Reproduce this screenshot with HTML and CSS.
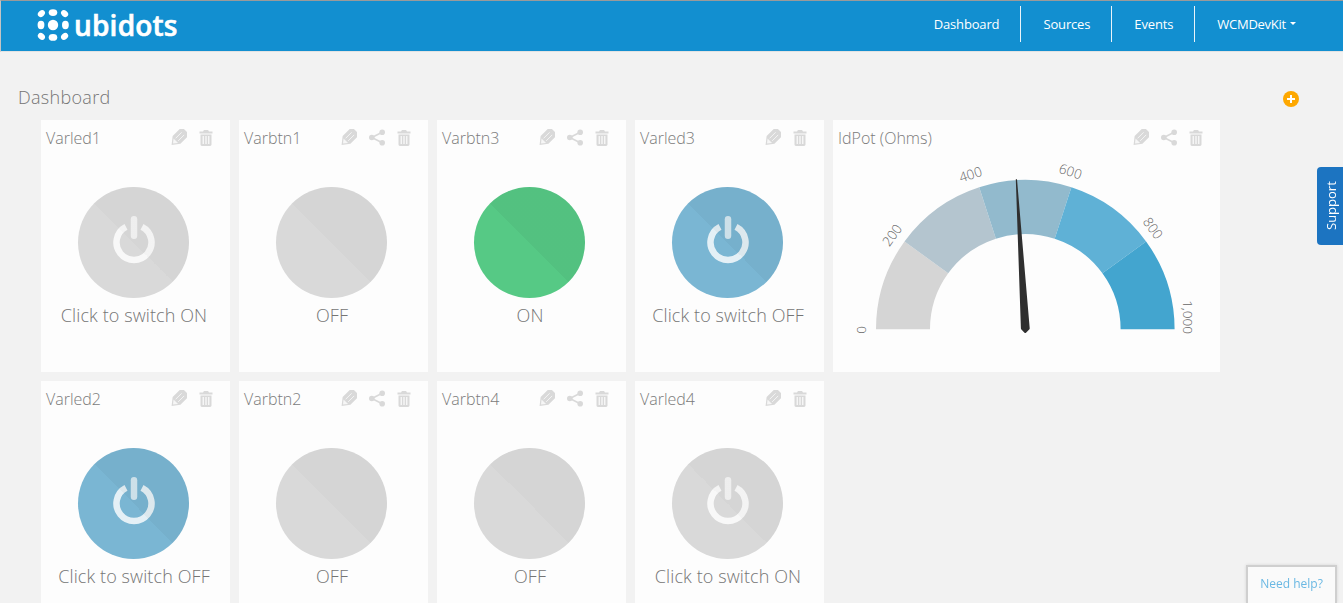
FILE: index.html
```html
<!DOCTYPE html>
<html lang="en">
<head>
<meta charset="utf-8">
<title>Ubidots Dashboard</title>
<link rel="stylesheet" href="styles.css">
</head>
<body>
<svg class="defs" width="0" height="0" aria-hidden="true">
  <symbol id="i-edit" viewBox="0 0 16 17">
    <g transform="rotate(45 8 8.5)">
      <path d="M2.500 1a2 2 0 0 1 2-2h7a2 2 0 0 1 2 2V12L8 19 2.500 12Z" fill="currentColor"/>
      <path d="M6.200 3V11.500M9.800 3V11.500" stroke="#fff" stroke-opacity=".75" stroke-width=".9" fill="none"/>
      <path d="M4.800 13 8 17l3.200-4Z" fill="#fff" fill-opacity=".75"/>
    </g>
  </symbol>
  <symbol id="i-share" viewBox="0 0 16 17">
    <circle cx="13.200" cy="3.200" r="2.800" fill="currentColor"/>
    <circle cx="2.800" cy="8.500" r="2.800" fill="currentColor"/>
    <circle cx="13.200" cy="13.800" r="2.800" fill="currentColor"/>
    <path d="M13.200 3.200 2.800 8.500l10.400 5.300" stroke="currentColor" stroke-width="1.600" fill="none"/>
  </symbol>
  <symbol id="i-trash" viewBox="0 0 14 17">
    <path d="M5 1h4l1 1.600h3.500v2H.5v-2H4Z" fill="currentColor"/>
    <path d="M1.500 5.500h11v10c0 .8-.6 1.400-1.400 1.400H2.900c-.8 0-1.400-.6-1.400-1.400Z" fill="currentColor"/>
    <path d="M4.200 7v8M7 7v8M9.800 7v8" stroke="#fff" stroke-width="1.100"/>
  </symbol>
  <symbol id="i-power" viewBox="0 0 42 48">
    <path d="M13 10.900a17.500 17.500 0 1 0 16 0" fill="none" stroke="#fff" stroke-opacity=".8" stroke-width="6.500" stroke-linecap="butt"/>
    <rect x="17.750" y="0" width="6.500" height="23" rx="3.250" fill="#fff" fill-opacity=".68"/>
  </symbol>
</svg>

<header class="navbar">
  <a class="brand">
    <svg class="brand-dots" width="34" height="34" viewBox="0 0 34 34" aria-hidden="true">
      <g fill="#fff">
        <circle cx="17" cy="17" r="5.200"/>
        <ellipse cx="17" cy="4.600" rx="4.300" ry="3.400"/>
        <ellipse cx="17" cy="29.400" rx="4.300" ry="3.400"/>
        <ellipse cx="5" cy="17" rx="3.400" ry="4.200"/>
        <ellipse cx="29.400" cy="17" rx="3.400" ry="4.200"/>
        <ellipse cx="5.400" cy="5.600" rx="3.900" ry="3" transform="rotate(-40 5.400 5.600)"/>
        <ellipse cx="28.600" cy="5.600" rx="3.900" ry="3" transform="rotate(40 28.600 5.600)"/>
        <ellipse cx="5.400" cy="28.400" rx="3.900" ry="3" transform="rotate(40 5.400 28.400)"/>
        <ellipse cx="28.600" cy="28.400" rx="3.900" ry="3" transform="rotate(-40 28.600 28.400)"/>
      </g>
    </svg>
    <span class="brand-name">ubidots</span>
  </a>
  <nav class="nav-links">
    <a class="nav-link">Dashboard</a>
    <a class="nav-link">Sources</a>
    <a class="nav-link">Events</a>
    <a class="nav-link nav-user">WCMDevKit<span class="caret"></span></a>
  </nav>
</header>

<main class="page">
  <div class="page-head">
    <h1 class="page-title">Dashboard</h1>
    <button class="add-btn" aria-label="Add widget"><span class="add-plus"></span></button>
  </div>

  <section class="grid">
    <article class="card">
      <div class="card-head"><span class="card-title">Varled1</span><span class="tools"><svg class="ic"><use href="#i-edit"/></svg><svg class="ic ic-trash"><use href="#i-trash"/></svg></span></div>
      <div class="switch gray"><svg class="power"><use href="#i-power"/></svg></div>
      <p class="state">Click to switch ON</p>
    </article>
    <article class="card">
      <div class="card-head"><span class="card-title">Varbtn1</span><span class="tools"><svg class="ic"><use href="#i-edit"/></svg><svg class="ic"><use href="#i-share"/></svg><svg class="ic ic-trash"><use href="#i-trash"/></svg></span></div>
      <div class="switch gray"></div>
      <p class="state">OFF</p>
    </article>
    <article class="card">
      <div class="card-head"><span class="card-title">Varbtn3</span><span class="tools"><svg class="ic"><use href="#i-edit"/></svg><svg class="ic"><use href="#i-share"/></svg><svg class="ic ic-trash"><use href="#i-trash"/></svg></span></div>
      <div class="switch green"></div>
      <p class="state">ON</p>
    </article>
    <article class="card">
      <div class="card-head"><span class="card-title">Varled3</span><span class="tools"><svg class="ic"><use href="#i-edit"/></svg><svg class="ic ic-trash"><use href="#i-trash"/></svg></span></div>
      <div class="switch blue"><svg class="power"><use href="#i-power"/></svg></div>
      <p class="state">Click to switch OFF</p>
    </article>
    <article class="card card-wide">
      <div class="card-head"><span class="card-title">IdPot (Ohms)</span><span class="tools"><svg class="ic"><use href="#i-edit"/></svg><svg class="ic"><use href="#i-share"/></svg><svg class="ic ic-trash"><use href="#i-trash"/></svg></span></div>
      <svg class="gauge" width="387" height="215" viewBox="0 0 387 215" role="img" aria-label="Gauge">
        <g transform="translate(192.300 172.300)">
          <path fill="#d5d5d5" d="M-149.300 0A149.300 149.300 0 0 1-120.800-87.800L-77.100-56A95.300 95.300 0 0 0-95.300 0Z"/>
          <path fill="#b4c5cf" d="M-120.800-87.800A149.300 149.300 0 0 1-46.100-142L-29.400-90.600A95.300 95.300 0 0 0-77.100-56Z"/>
          <path fill="#92bacd" d="M-46.100-142A149.300 149.300 0 0 1 46.100-142L29.400-90.600A95.300 95.300 0 0 0-29.400-90.600Z"/>
          <path fill="#5fb1d6" d="M46.100-142A149.300 149.300 0 0 1 120.800-87.800L77.100-56A95.300 95.300 0 0 0 29.400-90.600Z"/>
          <path fill="#43a5cf" d="M120.800-87.800A149.300 149.300 0 0 1 149.300 0H95.300A95.300 95.300 0 0 0 77.100-56Z"/>
          <path fill="#2f2f2f" d="M-9.500-150-4.400-1a1.500 1.500 0 0 0 .5 1.200L-.8 3.500c.5.400 1 .4 1.500 0l3.200-3.300a1.500 1.500 0 0 0 .5-1.200L-8.300-150Z"/>
        </g>
        <g class="gauge-labels">
          <text transform="translate(33 173) rotate(-90)" text-anchor="middle">0</text>
          <text transform="translate(63 81) rotate(-54)" text-anchor="middle">200</text>
          <text transform="translate(139 22) rotate(-18)" text-anchor="middle">400</text>
          <text transform="translate(236 19) rotate(18)" text-anchor="middle">600</text>
          <text transform="translate(316 74) rotate(54)" text-anchor="middle">800</text>
          <text transform="translate(350 160) rotate(90)" text-anchor="middle">1,000</text>
        </g>
      </svg>
    </article>

    <article class="card">
      <div class="card-head"><span class="card-title">Varled2</span><span class="tools"><svg class="ic"><use href="#i-edit"/></svg><svg class="ic ic-trash"><use href="#i-trash"/></svg></span></div>
      <div class="switch blue"><svg class="power"><use href="#i-power"/></svg></div>
      <p class="state">Click to switch OFF</p>
    </article>
    <article class="card">
      <div class="card-head"><span class="card-title">Varbtn2</span><span class="tools"><svg class="ic"><use href="#i-edit"/></svg><svg class="ic"><use href="#i-share"/></svg><svg class="ic ic-trash"><use href="#i-trash"/></svg></span></div>
      <div class="switch gray"></div>
      <p class="state">OFF</p>
    </article>
    <article class="card">
      <div class="card-head"><span class="card-title">Varbtn4</span><span class="tools"><svg class="ic"><use href="#i-edit"/></svg><svg class="ic"><use href="#i-share"/></svg><svg class="ic ic-trash"><use href="#i-trash"/></svg></span></div>
      <div class="switch gray"></div>
      <p class="state">OFF</p>
    </article>
    <article class="card">
      <div class="card-head"><span class="card-title">Varled4</span><span class="tools"><svg class="ic"><use href="#i-edit"/></svg><svg class="ic ic-trash"><use href="#i-trash"/></svg></span></div>
      <div class="switch gray"><svg class="power"><use href="#i-power"/></svg></div>
      <p class="state">Click to switch ON</p>
    </article>
  </section>
</main>

<a class="support-tab">Support</a>
<a class="help-box">Need help?</a>
</body>
</html>
```

FILE: styles.css
```css
* { box-sizing: border-box; }

html, body {
  margin: 0;
  height: 603px;
  overflow: hidden;
}

body {
  background: #f2f2f2;
  font-family: "Open Sans", "Liberation Sans", sans-serif;
  color: #777;
}

.defs { position: absolute; }

.navbar {
  height: 52px;
  background: #128fd0;
  border-top: 1px solid #9a9a9a;
  border-left: 1px solid #c4c4c4;
  border-bottom: 1px solid #e3e3e3;
  display: flex;
  justify-content: space-between;
  padding-left: 35px;
  padding-right: 26px;
}

.brand {
  display: flex;
  align-items: center;
  gap: 4px;
  height: 48px;
}

.brand-name {
  color: #fff;
  font-family: "Open Sans", sans-serif;
  font-size: 28px;
  font-weight: 600;
  letter-spacing: .2px;
  line-height: 44px;
  -webkit-text-stroke: .6px #fff;
}

.nav-links {
  display: flex;
  padding-top: 5px;
}

.nav-link {
  display: flex;
  align-items: center;
  height: 36px;
  padding: 0 21px 0 22px;
  color: #fff;
  font-size: 13px;
  letter-spacing: -.15px;
  border-left: 1px solid #e9f4fa;
}

.nav-link:first-child { border-left: 0; }
.nav-user { letter-spacing: -.25px; }

.caret {
  width: 0;
  height: 0;
  margin-left: 4px;
  margin-bottom: 2px;
  border-left: 3px solid transparent;
  border-right: 3px solid transparent;
  border-top: 3px solid #fff;
}

.page-head {
  display: flex;
  justify-content: space-between;
  align-items: center;
  padding: 22px 44px 0 18px;
  height: 68px;
}

.page-title {
  margin: 0;
  font-size: 18px;
  font-weight: 300;
  letter-spacing: .3px;
  line-height: 24px;
  color: #757575;
}

.add-btn {
  position: relative;
  width: 16px;
  height: 16px;
  margin-top: 4px;
  padding: 0;
  border: 0;
  border-radius: 50%;
  background: #fea800;
}

.add-plus {
  position: absolute;
  left: 4px;
  top: 7px;
  width: 8px;
  height: 2px;
  background: #fff;
}

.add-plus::after {
  content: "";
  position: absolute;
  left: 3px;
  top: -3px;
  width: 2px;
  height: 8px;
  background: #fff;
}

.grid {
  display: grid;
  grid-template-columns: repeat(6, 189px);
  grid-auto-rows: 252px;
  gap: 9px;
  padding-left: 41px;
}

.card {
  background: #fdfdfd;
  display: flex;
  flex-direction: column;
  align-items: center;
}

.card-wide { grid-column: span 2; }

.card-head {
  width: 100%;
  height: 35px;
  margin-bottom: 2px;
  display: flex;
  justify-content: space-between;
  align-items: center;
  padding: 0 17px 0 5px;
}

.card-title {
  font-size: 16px;
  font-weight: 300;
  line-height: 36px;
  color: #7b7b7b;
}

.tools {
  display: flex;
  gap: 12px;
  color: #d9d9d9;
}

.ic {
  display: block;
  width: 16px;
  height: 17px;
}

.ic-trash { width: 14px; }

.switch {
  position: relative;
  margin: 30px 4px 0 0;
  width: 111px;
  height: 111px;
  flex: none;
  border-radius: 50%;
  display: flex;
  justify-content: center;
  padding-top: 29px;
  overflow: hidden;
}

.switch::after {
  content: "";
  position: absolute;
  inset: 0;
  background: linear-gradient(45deg, transparent 50%, rgba(0, 0, 0, var(--shade)) 50%);
}

.switch.gray { background: #d9d9d9; --shade: .018; }
.switch.green { background: #56c985; --shade: .04; }
.switch.blue { background: #7ab6d3; --shade: .035; }

.power {
  display: block;
  width: 42px;
  height: 48px;
}

.state {
  margin: 4px 3px 0 0;
  font-size: 18px;
  font-weight: 300;
  letter-spacing: .1px;
  line-height: 26px;
  color: #757575;
}

.gauge { display: block; flex: none; }

.gauge-labels {
  font-family: "Open Sans", sans-serif;
  font-size: 13.500px;
  font-weight: 300;
  fill: #666;
}

.support-tab {
  position: fixed;
  left: 1317px;
  top: 167px;
  width: 26px;
  height: 78px;
  display: flex;
  align-items: center;
  justify-content: center;
  padding-right: 3px;
  background: #1c74c1;
  color: #fff;
  font-size: 13px;
  writing-mode: vertical-rl;
  transform: rotate(180deg);
  border-radius: 0 4px 4px 0;
}

.help-box {
  position: fixed;
  left: 1246px;
  top: 565px;
  width: 91px;
  height: 38px;
  display: flex;
  align-items: center;
  justify-content: center;
  padding-bottom: 3px;
  background: #fafafa;
  border: 2px solid #cfcfcf;
  border-bottom: 0;
  box-shadow: 0 0 3px rgba(0, 0, 0, .12);
  color: #6ab8e3;
  font-size: 12px;
  font-weight: 400;
}
```
